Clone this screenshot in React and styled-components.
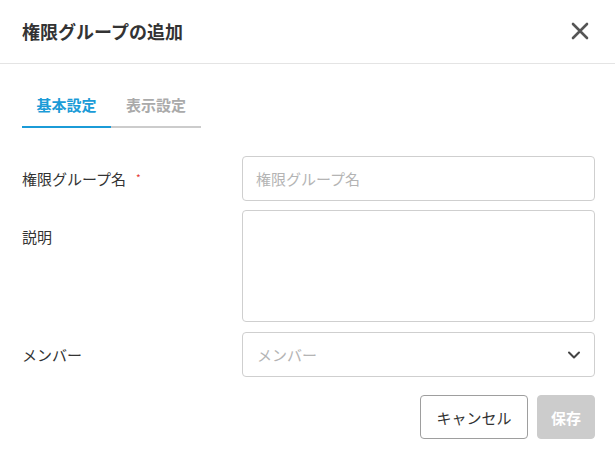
import React from "react";
import styled, { createGlobalStyle } from "styled-components";

const Global = createGlobalStyle`
  html, body { margin: 0; padding: 0; background: #fff; }
  body { font-family: "Noto Sans CJK JP", "Noto Sans", sans-serif; color: #333; }
  * { box-sizing: border-box; }
`;

const Modal = styled.div`
  width: 615px;
  height: 459px;
  background: #fff;
  display: flex;
  flex-direction: column;
`;

const Header = styled.div`
  height: 64px;
  display: flex;
  align-items: center;
  justify-content: space-between;
  padding: 0 22px 0 22px;
  border-bottom: 1px solid #e4e4e4;
`;

const Title = styled.h2`
  margin: 0;
  font-size: 18px;
  font-weight: 700;
  color: #333;
  line-height: 1;
  margin-top: -1px;
`;

const CloseButton = styled.button`
  border: none;
  background: none;
  padding: 0;
  width: 22px;
  height: 22px;
  display: flex;
  align-items: center;
  justify-content: center;
  cursor: pointer;
  margin-right: 2px;
  margin-top: -2px;
`;

const Body = styled.div`
  padding: 21px 20px 0 22px;
  display: flex;
  flex-direction: column;
`;

const Tabs = styled.div`
  display: flex;
  margin-bottom: 28px;
`;

const Tab = styled.div`
  padding: 9px 13px 10px 13px;
  width: ${(p) => p.$w}px;
  text-align: center;
  font-size: 15px;
  line-height: 22px;
  font-weight: 700;
  color: ${(p) => (p.$active ? "#1b9bd7" : "#aaaaaa")};
  border-bottom: 2px solid ${(p) => (p.$active ? "#1b9bd7" : "#cccccc")};
`;

const Row = styled.div`
  display: flex;
  align-items: ${(p) => (p.$top ? "flex-start" : "center")};
  margin-bottom: ${(p) => p.$mb}px;
`;

const Label = styled.label`
  width: 220px;
  flex-shrink: 0;
  font-size: 15px;
  line-height: 22px;
  color: #333;
  padding-top: ${(p) => (p.$top ? 16 : 0)}px;
  display: flex;
  align-items: flex-start;
`;

const Required = styled.span`
  color: #e53935;
  font-size: 10px;
  line-height: 10px;
  margin-left: 10px;
  margin-top: 5px;
`;

const fieldBase = `
  width: 353px;
  border: 1px solid #cfcfcf;
  border-radius: 4px;
  font-family: "Noto Sans CJK JP", "Noto Sans", sans-serif;
  font-size: 15px;
  color: #333;
  background: #fff;
  outline: none;
`;

const Input = styled.input`
  ${fieldBase}
  height: 45px;
  padding: 0 13px;
  &::placeholder { color: #b4b4b4; }
`;

const TextArea = styled.textarea`
  ${fieldBase}
  height: 112px;
  padding: 10px 13px;
  resize: none;
  display: block;
`;

const SelectBox = styled.div`
  ${fieldBase}
  height: 45px;
  padding: 0 13px 0 14px;
  display: flex;
  align-items: center;
  justify-content: space-between;
`;

const Placeholder = styled.span`
  color: #b4b4b4;
`;

const Footer = styled.div`
  display: flex;
  justify-content: flex-end;
  gap: 9px;
`;

const Button = styled.button`
  height: 44px;
  padding: 0 ${(p) => (p.$primary ? 13 : 14)}px;
  border-radius: 4px;
  font-family: "Noto Sans CJK JP", "Noto Sans", sans-serif;
  font-size: 15px;
  border: 1px solid ${(p) => (p.$primary ? "#cccccc" : "#9e9e9e")};
  background: ${(p) => (p.$primary ? "#cccccc" : "#fff")};
  color: ${(p) => (p.$primary ? "#ffffff" : "#333")};
  font-weight: ${(p) => (p.$primary ? 700 : 400)};
  width: ${(p) => p.$w}px;
`;

export default function App() {
  return (
    <>
      <Global />
      <Modal>
        <Header>
          <Title>権限グループの追加</Title>
          <CloseButton aria-label="閉じる">
            <svg width="18" height="18" viewBox="0 0 18 18">
              <path d="M2 2 L16 16 M16 2 L2 16" stroke="#555" strokeWidth="2.6" strokeLinecap="round" />
            </svg>
          </CloseButton>
        </Header>
        <Body>
          <Tabs>
            <Tab $active $w={89}>基本設定</Tab>
            <Tab $w={90}>表示設定</Tab>
          </Tabs>
          <Row $mb={9}>
            <Label>
              権限グループ名<Required>*</Required>
            </Label>
            <Input placeholder="権限グループ名" />
          </Row>
          <Row $top $mb={10}>
            <Label $top>説明</Label>
            <TextArea />
          </Row>
          <Row $mb={18}>
            <Label>メンバー</Label>
            <SelectBox>
              <Placeholder>メンバー</Placeholder>
              <svg width="14" height="10" viewBox="0 0 14 10">
                <path d="M2 2.5 L7 7.5 L12 2.5" fill="none" stroke="#444" strokeWidth="2" strokeLinecap="round" strokeLinejoin="round" />
              </svg>
            </SelectBox>
          </Row>
          <Footer>
            <Button $w={108}>キャンセル</Button>
            <Button $primary $w={58}>保存</Button>
          </Footer>
        </Body>
      </Modal>
    </>
  );
}
